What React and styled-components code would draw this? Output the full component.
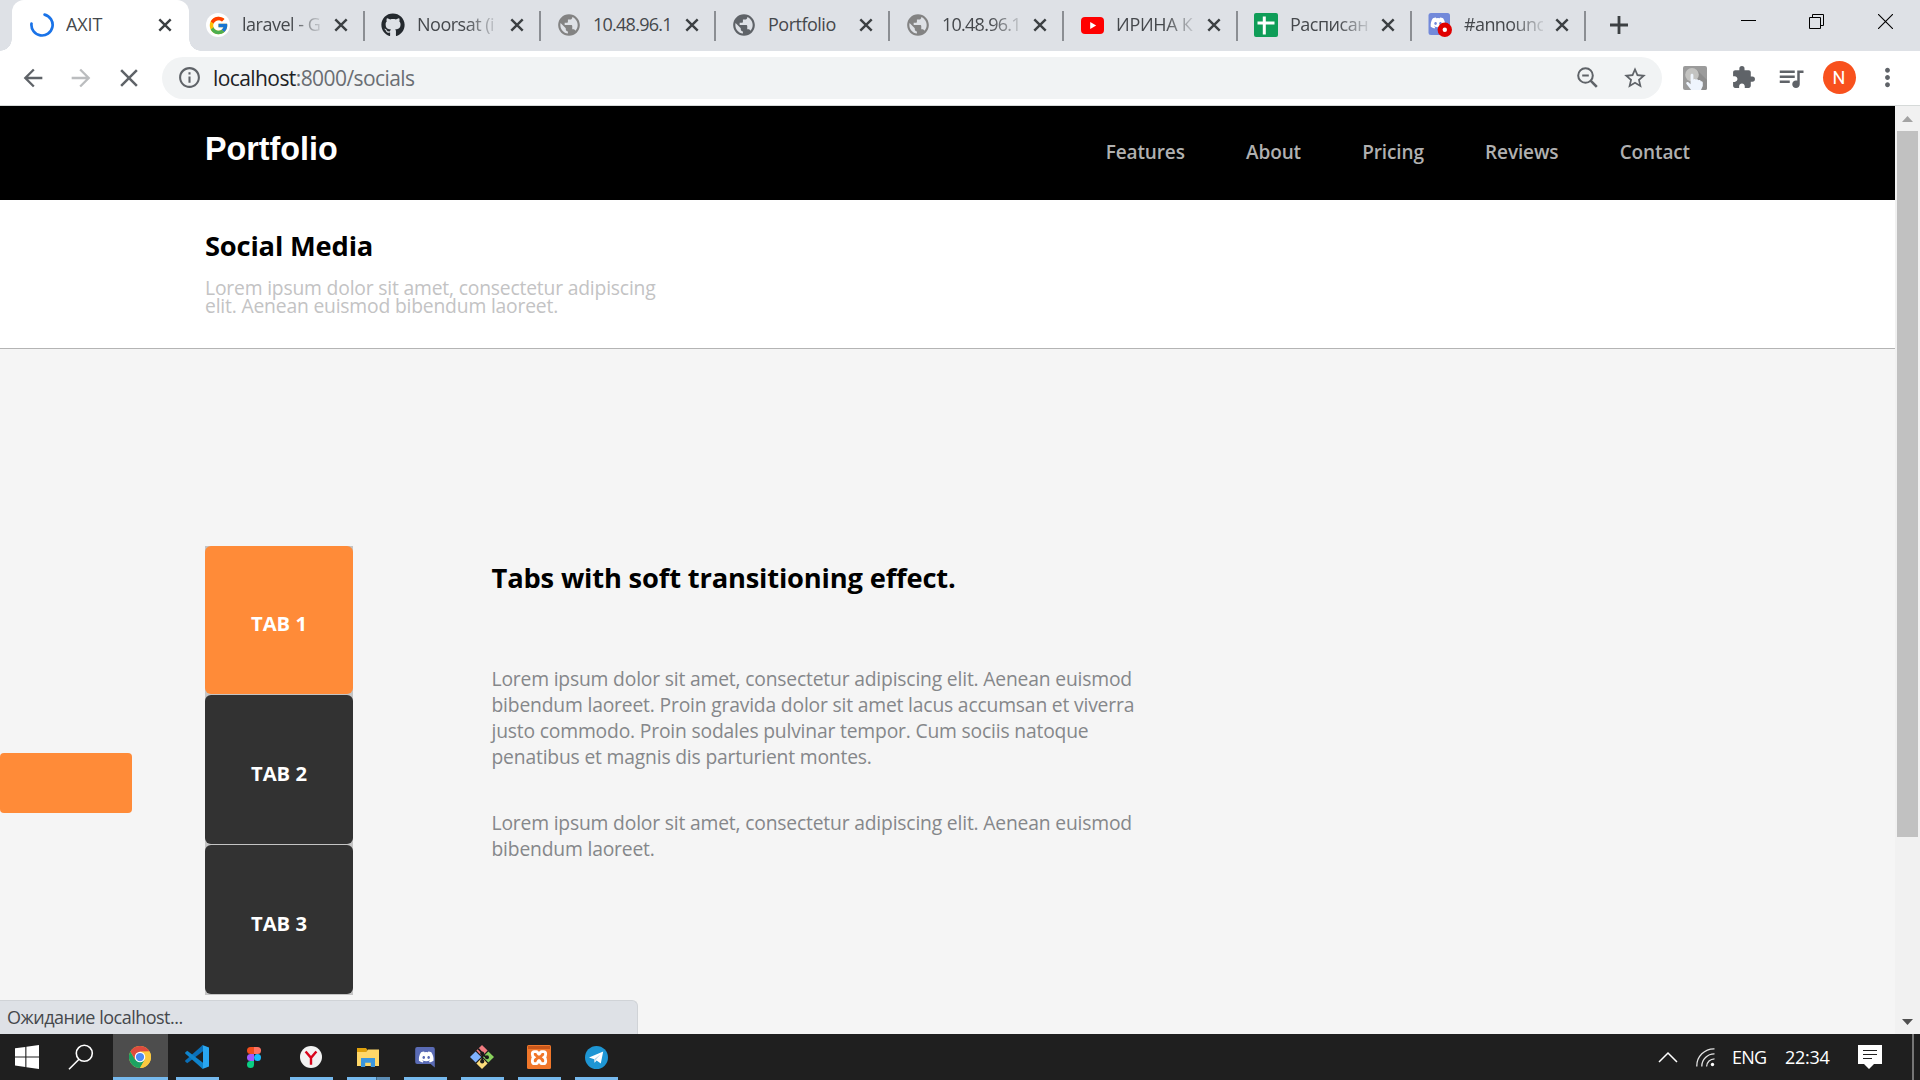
import React from "react";
import styled, { createGlobalStyle, css } from "styled-components";
import {
  MdArrowBack,
  MdArrowForward,
  MdClose,
  MdExtension,
  MdInfoOutline,
  MdMoreVert,
  MdPublic,
  MdQueueMusic,
  MdStarBorder,
} from "react-icons/md";
import { FaDiscord, FaGithub } from "react-icons/fa";
import { FcGoogle } from "react-icons/fc";

const Global = createGlobalStyle`
  *, *::before, *::after { box-sizing: border-box; }
  html, body { margin: 0; padding: 0; overflow: hidden; }
  body { font-family: "Open Sans", "Noto Sans", sans-serif; background: #fff; }
  h1, h2, p { margin: 0; }
  svg { display: block; flex: none; }
`;

const Screen = styled.div`
  width: 1920px;
  height: 1080px;
  display: flex;
  flex-direction: column;
  overflow: hidden;
`;

/* ---------- browser tab strip ---------- */

const TabStrip = styled.div`
  display: flex;
  flex: none;
  height: 51px;
  padding-left: 12px;
  background: #dee1e6;
`;

const BrowserTab = styled.div`
  position: relative;
  display: flex;
  align-items: center;
  flex: none;
  width: ${(p) => p.$width}px;
  height: 51px;
  padding: 0 12px 1px 16px;

  ${(p) =>
    p.$active
      ? css`
          margin-right: 1px;
          padding: 0 12px 1px 18px;
          background: #fff;
          border-radius: 12px 12px 0 0;
          &::before,
          &::after {
            content: "";
            position: absolute;
            bottom: 0;
            width: 12px;
            height: 12px;
          }
          &::before {
            left: -12px;
            background: radial-gradient(circle at 0 0, transparent 11.5px, #fff 12px);
          }
          &::after {
            right: -12px;
            background: radial-gradient(circle at 100% 0, transparent 11.5px, #fff 12px);
          }
        `
      : css`
          background: linear-gradient(#8b8e93, #8b8e93) right 11px / 2px 30px no-repeat;
        `}
`;

const Favicon = styled.span`
  display: flex;
  align-items: center;
  justify-content: center;
  flex: none;
  width: 24px;
  height: 24px;
  margin-right: 12px;
`;

const GoogleDisc = styled.span`
  display: flex;
  align-items: center;
  justify-content: center;
  width: 24px;
  height: 24px;
  border-radius: 50%;
  background: #fff;
`;

const TabTitle = styled.span`
  flex: none;
  width: 79px;
  height: 26px;
  overflow: hidden;
  white-space: nowrap;
  font-size: 18px;
  line-height: 25px;
  letter-spacing: ${(p) => p.$tracking ?? -0.5}px;
  color: #45484c;
  ${(p) =>
    p.$fade &&
    css`
      mask-image: linear-gradient(to right, #000 48px, transparent 84px);
    `}
`;

const TabClose = styled.span`
  display: flex;
  align-items: center;
  justify-content: center;
  width: 24px;
  height: 24px;
  margin-left: auto;
`;

const NewTab = styled.div`
  display: flex;
  align-items: center;
  justify-content: center;
  width: 65px;
  height: 50px;
`;

const WindowControls = styled.div`
  display: flex;
  margin-left: auto;
`;

const WindowButton = styled.div`
  display: flex;
  align-items: center;
  justify-content: center;
  width: 69px;
  height: 43px;
`;

/* ---------- browser toolbar ---------- */

const Toolbar = styled.div`
  display: flex;
  align-items: center;
  flex: none;
  height: 55px;
  padding: 0 8px 1px 9px;
  background: #fff;
  border-bottom: 1px solid #d6dad9;
`;

const ToolCell = styled.span`
  display: flex;
  align-items: center;
  justify-content: center;
  flex: none;
  width: 48px;
  height: 42px;
  color: ${(p) => p.$color || "#5f6368"};
`;

const Omnibox = styled.div`
  display: flex;
  align-items: center;
  flex: none;
  width: 1500px;
  height: 42px;
  margin: 0 9px;
  padding: 0 3px;
  border-radius: 21px;
  background: #f1f3f4;
`;

const Address = styled.span`
  flex: 1;
  height: 30px;
  font-size: 21px;
  line-height: 30px;
  letter-spacing: -0.58px;
  color: #6a6e73;
`;

const Host = styled.span`
  color: #202124;
`;

const Avatar = styled.span`
  display: flex;
  align-items: center;
  justify-content: center;
  width: 33px;
  height: 33px;
  border-radius: 50%;
  background: #f8511d;
  color: #fff;
  font: 18px Roboto, sans-serif;
`;

/* ---------- page ---------- */

const Viewport = styled.div`
  position: relative;
  display: flex;
  flex: none;
  height: 928px;
`;

const Page = styled.div`
  display: flex;
  flex-direction: column;
  width: 1895px;
`;

const Header = styled.header`
  display: flex;
  align-items: flex-start;
  justify-content: space-between;
  flex: none;
  height: 94px;
  padding: 23px 205px 0;
  background: #000;
`;

const Brand = styled.div`
  font: bold 32.3px/40px "Liberation Sans", Arial, sans-serif;
  color: #fff;
`;

const Nav = styled.nav`
  display: flex;
  gap: 61.2px;
  margin-top: 10px;
`;

const NavLink = styled.a`
  font-size: 19px;
  line-height: 26px;
  font-weight: 600;
  letter-spacing: -0.12px;
  color: #b0b0b0;
`;

const Hero = styled.section`
  flex: none;
  height: 149px;
  padding: 30px 205px 0;
  background: #fff;
  border-bottom: 1px solid #b4b4b4;
`;

const Title = styled.h1`
  font-size: 27.3px;
  line-height: 32px;
  font-weight: 700;
  letter-spacing: -0.17px;
  color: #000;
`;

const Intro = styled.p`
  width: 480px;
  margin-top: 17px;
  font-size: 19.3px;
  line-height: 18px;
  letter-spacing: -0.18px;
  color: #c3c3c4;
`;

const Content = styled.main`
  display: grid;
  grid-template-columns: 132px 221px 1fr;
  align-items: start;
  flex: 1;
  background: #f5f5f5;
`;

const SideButton = styled.div`
  height: 60px;
  margin-top: 404px;
  border-radius: 4px;
  background: #ff8b38;
`;

const TabList = styled.div`
  display: flex;
  flex-direction: column;
  gap: 1px;
  width: 148px;
  height: 449px;
  margin: 197px 0 0 73px;
  background: #c4c4c4;
`;

const TabButton = styled.div`
  display: flex;
  align-items: center;
  justify-content: center;
  flex: none;
  height: ${(p) => (p.$active ? 148 : 149)}px;
  padding-top: 6px;
  border-radius: 6px;
  background: ${(p) => (p.$active ? "#ff8b38" : "#323232")};
  color: #fff;
  font-size: 20.2px;
  line-height: 26px;
  font-weight: 700;
`;

const Article = styled.article`
  margin: 213px 0 0 138.5px;
`;

const ArticleTitle = styled.h2`
  font-size: 27.3px;
  line-height: 32px;
  font-weight: 700;
  letter-spacing: -0.17px;
  color: #000;
`;

const Paragraph = styled.p`
  width: 680px;
  margin-top: ${(p) => (p.$first ? 72 : 40)}px;
  font-size: 19.3px;
  line-height: 26px;
  letter-spacing: -0.18px;
  color: #85878a;
`;

const Scrollbar = styled.div`
  display: flex;
  flex-direction: column;
  width: 25px;
  background: #f1f1f1;
`;

const ScrollArrow = styled.div`
  display: flex;
  align-items: center;
  justify-content: center;
  height: 25px;
  padding-top: 1px;
`;

const ScrollThumb = styled.div`
  height: 706px;
  margin: 0 2px auto;
  background: #c1c1c1;
`;

const StatusBubble = styled.div`
  position: absolute;
  left: 0;
  bottom: 0;
  width: 638px;
  height: 34px;
  padding: 3px 7px 0;
  border: 1px solid #d0d3d7;
  border-left: 0;
  border-bottom: 0;
  border-radius: 0 6px 0 0;
  background: #dee1e6;
  color: #45484c;
  font-size: 18px;
  line-height: 26px;
  letter-spacing: -0.5px;
`;

/* ---------- taskbar ---------- */

const Taskbar = styled.div`
  display: flex;
  flex: none;
  height: 46px;
  background: #1f1f1f;
  color: #fff;
`;

const TaskItem = styled.div`
  display: grid;
  grid-template-rows: 43px 3px;
  justify-items: center;
  align-items: center;
  width: ${(p) => (p.$focused ? 55 : p.$width || 57)}px;
  margin: ${(p) => (p.$focused ? "0 1px" : "0")};
  background: ${(p) => (p.$focused ? "#4d4d4d" : "transparent")};
`;

const TaskIcon = styled.div`
  padding: 3px ${(p) => p.$pull ?? 1}px 0 0;
`;

const RunningMark = styled.div`
  width: ${(p) => (p.$wide ? 55 : 43)}px;
  height: 3px;
  background: ${(p) =>
    p.$grouped ? "linear-gradient(to right, #76b9ed 29px, #3f6b8c 29px, #3f6b8c 30px, #5c8db5 30px)" : "#76b9ed"};
`;

const Tray = styled.div`
  display: flex;
  align-items: center;
  margin-left: auto;
  font-size: 18px;
  line-height: 26px;
`;

const TrayIcon = styled.span`
  margin-right: ${(p) => p.$after}px;
`;

const TrayText = styled.span`
  width: ${(p) => p.$width}px;
  letter-spacing: ${(p) => p.$tracking}px;
`;

const ShowDesktop = styled.div`
  width: 8px;
  height: 46px;
  border-left: 2px solid #767676;
`;

/* ---------- drawings ---------- */

const CloseMark = () => (
  <svg width="14" height="14" viewBox="0 0 14 14">
    <path d="M1.3 1.3 12.7 12.7M12.7 1.3 1.3 12.7" stroke="#3c4043" strokeWidth="2.4" />
  </svg>
);

const Spinner = () => (
  <svg width="24" height="24" viewBox="0 0 24 24">
    <path d="M14.6 1.6A10.6 10.6 0 1 1 1.5 10.6" fill="none" stroke="#1a73e8" strokeWidth="2.7" strokeLinecap="round" />
  </svg>
);

const ZoomOut = () => (
  <svg width="21" height="21" viewBox="0 0 21 21" fill="none" stroke="#5f6368" strokeWidth="2">
    <circle cx="8.5" cy="8.5" r="7.3" />
    <path d="M5.2 8.5h6.6" />
    <path d="M13.6 13.6 19.8 19.8" strokeWidth="2.6" />
  </svg>
);

const YouTube = () => (
  <svg width="23" height="17" viewBox="0 0 23 17">
    <rect width="23" height="17" rx="4" fill="#f00" />
    <path d="M9.2 5v7l6-3.5z" fill="#fff" />
  </svg>
);

const Sheets = () => (
  <svg width="24" height="24" viewBox="0 0 24 24">
    <rect width="24" height="24" rx="2" fill="#0f9d58" />
    <path d="M3.5 10h17M10.3 3.5v18" stroke="#fff" strokeWidth="3" />
  </svg>
);

const DiscordBadge = () => (
  <svg width="24" height="24" viewBox="0 0 24 24">
    <rect x="0.5" width="21.5" height="22" rx="2.5" fill="#7289da" />
    <FaDiscord x="2" y="2" width="18" height="17" color="#fff" />
    <circle cx="16.8" cy="16.8" r="7.2" fill="#e00000" />
    <circle cx="16.8" cy="16.8" r="2.2" fill="#fff" />
  </svg>
);

const TouchIcon = () => (
  <svg width="24" height="24" viewBox="0 0 24 24">
    <rect width="24" height="24" rx="2" fill="#9b9b9b" />
    <path d="M14 4 24 14V22a2 2 0 0 1-2 2H10z" fill="#8c8c8c" />
    <circle cx="9" cy="8.7" r="6.8" fill="#c3c3c1" />
    <path
      d="M7.6 9.3c0-2 2.8-2 2.8 0v4.3c.4-.8 2-.9 2.6.2.5-.7 2-.6 2.4.5.8-.6 2.3-.1 2.5 1.1.9-.3 1.9.3 1.9 1.3V20L18 24H8.2L3.5 18c-1-1.5.6-2.8 1.9-1.7l2.2 2z"
      fill="#eff5fd"
    />
  </svg>
);

const WindowsLogo = () => (
  <svg width="24" height="24" viewBox="0 0 24 24" fill="#fff">
    <path d="M0 3.3 10.3 2v9.4H0zM11.4 1.8 24 0v11.4H11.4zM0 12.6h10.3V22L0 20.6zM11.4 12.6H24V24l-12.6-1.8z" />
  </svg>
);

const SearchLoupe = () => (
  <svg width="26" height="26" viewBox="0 0 26 26" fill="none" stroke="#fff" strokeWidth="1.6">
    <circle cx="16.3" cy="9.3" r="8" />
    <path d="M11 15.3 1 25.2" />
  </svg>
);

const Chrome = () => (
  <svg width="22" height="22" viewBox="0 0 48 48">
    <circle cx="24" cy="24" r="24" fill="#fbc940" />
    <path d="M3.2 12A24 24 0 0 0 24 48L34.4 30 24 24 13.6 30z" fill="#1da362" />
    <path d="M3.2 12A24 24 0 0 1 44.8 12H24L13.6 30z" fill="#dd4b3e" />
    <path d="M44.8 12A24 24 0 0 1 24 48L34.4 30 24 13z" fill="#fbc940" />
    <circle cx="24" cy="24" r="11.5" fill="#fff" />
    <circle cx="24" cy="24" r="9" fill="#4c8bf5" />
  </svg>
);

const VsCode = () => (
  <svg width="24" height="24" viewBox="0 0 24 24">
    <path d="M18 6.3 2.2 18.2.2 16.6v-1L17.2.4 18 0z" fill="#0a6fb8" />
    <path d="M18 17.7 2.2 5.8.2 7.4v1l17 15.2.8.4z" fill="#0f84cc" />
    <path d="M17.4 0 24 2.6V21.4L17.4 24c.4-.3.6-.8.6-1.5V1.5c0-.7-.2-1.2-.6-1.5z" fill="#29a6f0" />
  </svg>
);

const Figma = () => (
  <svg width="14" height="21" viewBox="0 0 14 21">
    <path d="M3.5 0H7v7H3.5a3.5 3.5 0 0 1 0-7z" fill="#f24e1e" />
    <path d="M7 0h3.5a3.5 3.5 0 0 1 0 7H7z" fill="#ff7262" />
    <path d="M3.5 7H7v7H3.5a3.5 3.5 0 0 1 0-7z" fill="#a259ff" />
    <circle cx="10.5" cy="10.5" r="3.5" fill="#1abcfe" />
    <path d="M3.5 14H7v3.5A3.5 3.5 0 1 1 3.5 14z" fill="#0acf83" />
  </svg>
);

const Yandex = () => (
  <svg width="22" height="22" viewBox="0 0 22 22">
    <circle cx="11" cy="11" r="11" fill="#f2f2f2" />
    <path d="M5.6 5.4 11 11.8l5.4-6.4M11 11.4v7.4" fill="none" stroke="#d9041b" strokeWidth="2.4" />
  </svg>
);

const Folder = () => (
  <svg width="22" height="19" viewBox="0 0 22 19">
    <path d="M0 0h9l1.5 2-1.5 2.5H0z" fill="#e0a10c" />
    <path d="M0 4h9l2-2.5h11V18H0z" fill="#ffd768" />
    <path d="M4 19v-9h14v9h-4.2v-4.3H8.2V19z" fill="#3c96dd" />
  </svg>
);

const DiscordApp = () => (
  <svg width="20" height="22" viewBox="0 0 20 22">
    <path d="M2.2 1h15.6a2 2 0 0 1 2 2v18.6L15.6 18H2.2a2 2 0 0 1-2-2V3a2 2 0 0 1 2-2z" fill="#5a6bb5" />
    <FaDiscord x="3.2" y="3" width="13.6" height="14" color="#fff" />
  </svg>
);

const GitBash = () => (
  <svg width="24" height="24" viewBox="0 0 24 24">
    <path d="M12 0 17.6 5.6 12 11.2 6.4 5.6z" fill="#f07c80" />
    <path d="M18.4 6.4 24 12l-5.6 5.6L12.8 12z" fill="#89d15d" />
    <path d="M5.6 6.4 11.2 12l-5.6 5.6L0 12z" fill="#7fb2ff" />
    <path d="M12 12.8l5.6 5.6L12 24l-5.6-5.6z" fill="#fbdc7c" />
    <path d="M8.2 3.6 12.2 8v8.5M12.2 9.5l4.6 3" fill="none" stroke="#1a1a1a" strokeWidth="1.7" />
    <circle cx="12.2" cy="8.6" r="2" fill="#1a1a1a" />
    <circle cx="12.2" cy="16.4" r="2.1" fill="#1a1a1a" />
    <circle cx="17" cy="12.2" r="2" fill="#1a1a1a" />
  </svg>
);

const Xampp = () => (
  <svg width="24" height="24" viewBox="0 0 24 24">
    <rect width="24" height="24" rx="1.5" fill="#f1772a" />
    <path d="M1 1h22v3H1z" fill="#c9571b" />
    <path
      d="M7.4 6.6h2.2c1.3 0 1.2 2.6 2.4 2.6s1.1-2.6 2.4-2.6h2.2c2.9 0 2.4 4.3.6 5.6 1.8 1.3 2.3 6.4-.6 6.4h-2.2c-1.3 0-1.2-3.2-2.4-3.2s-1.1 3.2-2.4 3.2H7.4c-2.9 0-2.4-5.1-.6-6.4-1.8-1.3-2.3-5.6.6-5.6z"
      fill="none"
      stroke="#fff"
      strokeWidth="2.9"
    />
  </svg>
);

const Telegram = () => (
  <svg width="23" height="23" viewBox="0 0 23 23">
    <circle cx="11.5" cy="11.5" r="11.5" fill="#1e96d4" />
    <path d="M4 11.5 18.2 5.6 15.8 17.6 11.6 14.6 9.6 16.8 9.2 13.2z" fill="#fff" />
    <path d="M9.2 13.2 15.6 8.2 10.6 13.9 9.6 16.8z" fill="#b5d4e8" />
  </svg>
);

const Wifi = () => (
  <svg width="19" height="19" viewBox="0 0 19 19" fill="none" stroke="#e4e4e4" strokeWidth="1.3">
    <path d="M.8 18.5A17.2 17.2 0 0 1 18.5.8M5.8 18.5A12.5 12.5 0 0 1 18.5 5.9M10.6 18.5a8 8 0 0 1 7.9-7.7" />
    <circle cx="16.5" cy="16.5" r="1.7" fill="#fff" stroke="none" />
  </svg>
);

const Notifications = () => (
  <svg width="24" height="24" viewBox="0 0 24 24">
    <path d="M0 0h24v19h-8l-5 5-5-5H0z" fill="#fff" />
    <path d="M5 5.5h14M5 9.5h14M5 13.5h9" stroke="#1f1f1f" strokeWidth="1.2" />
  </svg>
);

const browserTabs = [
  { title: "laravel - G", width: 175, fade: true, icon: <GoogleDisc><FcGoogle size={21} /></GoogleDisc> },
  { title: "Noorsat (i", width: 176, fade: true, icon: <FaGithub size={24} color="#24292e" /> },
  { title: "10.48.96.1", width: 175, tracking: -0.75, icon: <MdPublic size={26} color="#838383" /> },
  { title: "Portfolio", width: 174, icon: <MdPublic size={26} color="#5f6368" /> },
  { title: "10.48.96.1", width: 174, fade: true, tracking: -0.75, icon: <MdPublic size={26} color="#838383" /> },
  { title: "ИРИНА К", width: 174, fade: true, tracking: -0.3, icon: <YouTube /> },
  { title: "Расписан", width: 174, fade: true, icon: <Sheets /> },
  { title: "#announc", width: 174, fade: true, tracking: -0.6, icon: <DiscordBadge /> },
];

const navLinks = ["Features", "About", "Pricing", "Reviews", "Contact"];

const apps = [
  { id: "chrome", icon: <Chrome />, focused: true, running: true },
  { id: "vscode", icon: <VsCode />, running: true },
  { id: "figma", icon: <Figma /> },
  { id: "yandex", icon: <Yandex />, running: true },
  { id: "explorer", icon: <Folder />, running: true, grouped: true },
  { id: "discord", icon: <DiscordApp />, running: true },
  { id: "git", icon: <GitBash />, running: true },
  { id: "xampp", icon: <Xampp />, running: true },
  { id: "telegram", icon: <Telegram />, running: true },
];

export default function App() {
  return (
    <Screen>
      <Global />
      <TabStrip>
        <BrowserTab $active $width={177}>
          <Favicon><Spinner /></Favicon>
          <TabTitle $tracking={-0.1}>AXIT</TabTitle>
          <TabClose><CloseMark /></TabClose>
        </BrowserTab>
        {browserTabs.map((tab, i) => (
          <BrowserTab key={i} $width={tab.width}>
            <Favicon>{tab.icon}</Favicon>
            <TabTitle $fade={tab.fade} $tracking={tab.tracking}>{tab.title}</TabTitle>
            <TabClose><CloseMark /></TabClose>
          </BrowserTab>
        ))}
        <NewTab>
          <svg width="18" height="18" viewBox="0 0 18 18">
            <path d="M9 0v18M0 9h18" stroke="#3c4043" strokeWidth="2.8" />
          </svg>
        </NewTab>
        <WindowControls>
          <WindowButton>
            <svg width="17" height="15" viewBox="0 0 17 15"><path d="M2 6.5h15" stroke="#000" /></svg>
          </WindowButton>
          <WindowButton>
            <svg width="15" height="15" viewBox="0 0 15 15" fill="none" stroke="#000">
              <path d="M.5 3.5h11v11H.5zM3.5 3.5v-3h11v11h-3" />
            </svg>
          </WindowButton>
          <WindowButton>
            <svg width="15" height="15" viewBox="0 0 15 15">
              <path d="M0 0l15 15M15 0 0 15" stroke="#000" strokeWidth="1.1" />
            </svg>
          </WindowButton>
        </WindowControls>
      </TabStrip>

      <Toolbar>
        <ToolCell><MdArrowBack size={28} /></ToolCell>
        <ToolCell $color="#bbbdbf"><MdArrowForward size={28} /></ToolCell>
        <ToolCell><MdClose size={30} /></ToolCell>
        <Omnibox>
          <ToolCell><MdInfoOutline size={25} /></ToolCell>
          <Address><Host>localhost</Host>:8000/socials</Address>
          <ToolCell><ZoomOut /></ToolCell>
          <ToolCell><MdStarBorder size={26} /></ToolCell>
        </Omnibox>
        <ToolCell><TouchIcon /></ToolCell>
        <ToolCell><MdExtension size={25} /></ToolCell>
        <ToolCell><MdQueueMusic size={30} /></ToolCell>
        <ToolCell><Avatar>N</Avatar></ToolCell>
        <ToolCell><MdMoreVert size={29} /></ToolCell>
      </Toolbar>

      <Viewport>
        <Page>
          <Header>
            <Brand>Portfolio</Brand>
            <Nav>{navLinks.map((label) => <NavLink key={label}>{label}</NavLink>)}</Nav>
          </Header>
          <Hero>
            <Title>Social Media</Title>
            <Intro>
              Lorem ipsum dolor sit amet, consectetur adipiscing
              <br />
              elit. Aenean euismod bibendum laoreet.
            </Intro>
          </Hero>
          <Content>
            <SideButton />
            <TabList>
              <TabButton $active>TAB 1</TabButton>
              <TabButton>TAB 2</TabButton>
              <TabButton>TAB 3</TabButton>
            </TabList>
            <Article>
              <ArticleTitle>Tabs with soft transitioning effect.</ArticleTitle>
              <Paragraph $first>
                Lorem ipsum dolor sit amet, consectetur adipiscing elit. Aenean euismod
                <br />
                bibendum laoreet. Proin gravida dolor sit amet lacus accumsan et viverra
                <br />
                justo commodo. Proin sodales pulvinar tempor. Cum sociis natoque
                <br />
                penatibus et magnis dis parturient montes.
              </Paragraph>
              <Paragraph>
                Lorem ipsum dolor sit amet, consectetur adipiscing elit. Aenean euismod
                <br />
                bibendum laoreet.
              </Paragraph>
            </Article>
          </Content>
        </Page>
        <Scrollbar>
          <ScrollArrow>
            <svg width="11" height="6" viewBox="0 0 11 6"><path d="M0 6 5.5 0 11 6z" fill="#a3a3a3" /></svg>
          </ScrollArrow>
          <ScrollThumb />
          <ScrollArrow>
            <svg width="11" height="6" viewBox="0 0 11 6"><path d="M0 0h11L5.5 6z" fill="#505050" /></svg>
          </ScrollArrow>
        </Scrollbar>
        <StatusBubble>Ожидание localhost...</StatusBubble>
      </Viewport>

      <Taskbar>
        <TaskItem $width={54}><TaskIcon $pull={0}><WindowsLogo /></TaskIcon></TaskItem>
        <TaskItem $width={58}><TaskIcon $pull={4}><SearchLoupe /></TaskIcon></TaskItem>
        {apps.map((app) => (
          <TaskItem key={app.id} $focused={app.focused}>
            <TaskIcon>{app.icon}</TaskIcon>
            {app.running && <RunningMark $wide={app.focused} $grouped={app.grouped} />}
          </TaskItem>
        ))}
        <Tray>
          <TrayIcon $after={18}>
            <svg width="20" height="12" viewBox="0 0 20 12">
              <path d="M1 11l9-9 9 9" fill="none" stroke="#fff" strokeWidth="1.5" />
            </svg>
          </TrayIcon>
          <TrayIcon $after={17}><Wifi /></TrayIcon>
          <TrayText $width={53} $tracking={-0.8}>ENG</TrayText>
          <TrayText $width={73} $tracking={-0.3}>22:34</TrayText>
          <TrayIcon $after={30}><Notifications /></TrayIcon>
          <ShowDesktop />
        </Tray>
      </Taskbar>
    </Screen>
  );
}
